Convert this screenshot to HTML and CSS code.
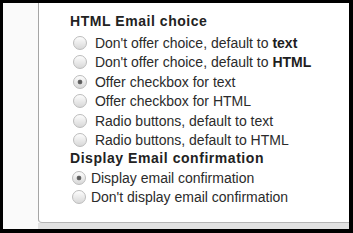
FILE: index.html
```html
<!DOCTYPE html>
<html lang="en">
<head>
  <meta charset="UTF-8" />
  <title>Email preferences</title>
  <link rel="stylesheet" href="styles.css">
</head>
<body>
  <div class="frame">
    <div class="gutter"></div>
    <div class="column">
      <div class="panel">
        <div class="group-title">HTML Email choice</div>
        <div class="options">
          <label class="option"><input type="radio" name="html"> Don't offer choice, default to <b>text</b></label>
          <label class="option"><input type="radio" name="html"> Don't offer choice, default to <b>HTML</b></label>
          <label class="option"><input type="radio" name="html" checked> Offer checkbox for text</label>
          <label class="option"><input type="radio" name="html"> Offer checkbox for HTML</label>
          <label class="option"><input type="radio" name="html"> Radio buttons, default to text</label>
          <label class="option"><input type="radio" name="html"> Radio buttons, default to HTML</label>
        </div>
        <div class="group-title second">Display Email confirmation</div>
        <div class="options tight">
          <label class="option"><input type="radio" name="confirm" checked> Display email confirmation</label>
          <label class="option"><input type="radio" name="confirm"> Don't display email confirmation</label>
        </div>
      </div>
      <div class="strip"></div>
    </div>
  </div>
</body>
</html>
```

FILE: styles.css
```css
html, body {
  margin: 0;
  height: 100%;
}

body {
  background: #000;
  padding: 3px 4px 4px 3px;
  box-sizing: border-box;
  font-family: 'Liberation Sans', Arial, sans-serif;
  color: #2b2b2b;
}

.frame {
  display: flex;
  height: 226px;
  background: #fafafa;
}

.gutter {
  width: 35px;
}

.column {
  flex: 1;
  display: flex;
  flex-direction: column;
}

.panel {
  flex: 1;
  background: #fff;
  border-left: 1px solid #a5a5a5;
  border-bottom: 1px solid #b5b5b5;
  border-bottom-left-radius: 4px;
  padding: 9px 0 0 31px;
}

.strip {
  height: 6px;
  background: #e2e2e2;
}

.group-title {
  font-size: 14px;
  font-weight: bold;
  letter-spacing: 0.55px;
  line-height: 18px;
  color: #222;
  margin-bottom: 3px;
}

.group-title.second {
  line-height: 16px;
  margin-bottom: 2px;
}

.option {
  display: flex;
  align-items: center;
  height: 19.5px;
  font-size: 14px;
  white-space: pre;
}

.option b {
  color: #1e1e1e;
}

.option input {
  appearance: none;
  -webkit-appearance: none;
  width: 14px;
  height: 14px;
  margin: 0 4px 0 3px;
  border: 1px solid #bcbcbc;
  border-radius: 50%;
  box-sizing: border-box;
  background: linear-gradient(#fdfdfd, #d8d8d8);
}

.tight .option input {
  margin: 0 1px 0 2px;
}

.option input:checked {
  background: radial-gradient(circle, #555 0, #666 2px, transparent 2.7px), linear-gradient(#fdfdfd, #d8d8d8);
}
```
